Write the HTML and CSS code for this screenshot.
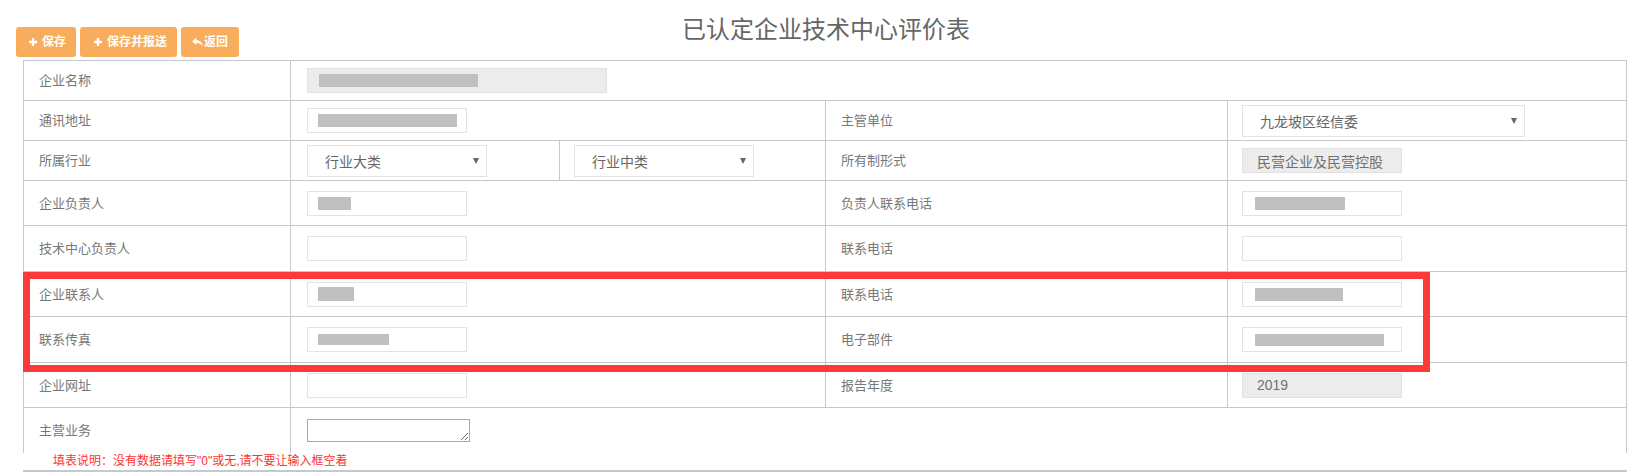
FILE: index.html
```html
<!DOCTYPE html>
<html lang="zh-CN">
<head>
<meta charset="utf-8">
<title>已认定企业技术中心评价表</title>
<link rel="stylesheet" href="styles.css">
</head>
<body>
<div class="page">
  <header class="topbar">
    <div class="actions">
      <button class="btn btn-save" type="button"><svg class="ico-plus" viewBox="0 0 8 8" width="8" height="8"><path d="M2.8 0h2.4v2.8H8v2.4H5.2V8H2.8V5.2H0V2.8h2.8z"/></svg>保存</button>
      <button class="btn btn-send" type="button"><svg class="ico-plus" viewBox="0 0 8 8" width="8" height="8"><path d="M2.8 0h2.4v2.8H8v2.4H5.2V8H2.8V5.2H0V2.8h2.8z"/></svg>保存并报送</button>
      <button class="btn btn-back" type="button"><svg class="ico-back" viewBox="0 0 12 10" width="11" height="10"><path d="M4.6 0.4 0.2 4.4 4.6 8.4V6c3 0 5.2 0.8 7.2 3.4C11.2 5.8 8.8 3.2 4.6 2.9z"/></svg>返回</button>
    </div>
    <h1 class="title">已认定企业技术中心评价表</h1>
    <div class="spacer"></div>
  </header>

  <div class="form-wrap">
    <div class="form-grid">
      <!-- row 1 -->
      <div class="cell label">企业名称</div>
      <div class="cell value span4"><div class="readonly wide"><span class="redact r-name"></span></div></div>
      <!-- row 2 -->
      <div class="cell label">通讯地址</div>
      <div class="cell value span2"><div class="input"><span class="redact r-addr"></span></div></div>
      <div class="cell label">主管单位</div>
      <div class="cell value right"><div class="select big"><span>九龙坡区经信委</span><i class="caret"></i></div></div>
      <!-- row 3 -->
      <div class="cell label">所属行业</div>
      <div class="cell value"><div class="select"><span>行业大类</span><i class="caret"></i></div></div>
      <div class="cell value sub"><div class="select"><span>行业中类</span><i class="caret"></i></div></div>
      <div class="cell label">所有制形式</div>
      <div class="cell value right"><div class="readonly">民营企业及民营控股</div></div>
      <!-- row 4 -->
      <div class="cell label">企业负责人</div>
      <div class="cell value span2"><div class="input"><span class="redact r-short"></span></div></div>
      <div class="cell label">负责人联系电话</div>
      <div class="cell value right"><div class="input"><span class="redact r-phone"></span></div></div>
      <!-- row 5 -->
      <div class="cell label">技术中心负责人</div>
      <div class="cell value span2"><div class="input"></div></div>
      <div class="cell label">联系电话</div>
      <div class="cell value right"><div class="input"></div></div>
      <!-- row 6 -->
      <div class="cell label">企业联系人</div>
      <div class="cell value span2"><div class="input"><span class="redact r-contact"></span></div></div>
      <div class="cell label">联系电话</div>
      <div class="cell value right"><div class="input"><span class="redact r-phone2"></span></div></div>
      <!-- row 7 -->
      <div class="cell label">联系传真</div>
      <div class="cell value span2"><div class="input"><span class="redact r-fax"></span></div></div>
      <div class="cell label">电子部件</div>
      <div class="cell value right"><div class="input"><span class="redact r-mail"></span></div></div>
      <!-- row 8 -->
      <div class="cell label">企业网址</div>
      <div class="cell value span2"><div class="input"></div></div>
      <div class="cell label">报告年度</div>
      <div class="cell value right"><div class="readonly">2019</div></div>
      <!-- row 9 -->
      <div class="cell label last">主营业务</div>
      <div class="cell value span4 last"><textarea class="area"></textarea></div>
    </div>
    <div class="highlight"></div>
  </div>

  <p class="note">填表说明：没有数据请填写"0"或无,请不要让输入框空着</p>
  <div class="rule"></div>
</div>
</body>
</html>
```

FILE: styles.css
```css
* { box-sizing: border-box; }

html, body {
  margin: 0;
  padding: 0;
  background: #fff;
}

body {
  font-family: "Liberation Sans", "Noto Sans CJK SC", sans-serif;
  color: #666;
  width: 1636px;
  height: 472px;
  overflow: hidden;
}

.page {
  width: 1636px;
}

/* ---------- header ---------- */
.topbar {
  display: grid;
  grid-template-columns: 1fr auto 1fr;
  align-items: start;
  height: 60px;
  padding-left: 16px;
}

.actions {
  display: flex;
  gap: 4px;
  margin-top: 27px;
}

.btn {
  display: flex;
  align-items: center;
  flex: none;
  height: 30px;
  border: 0;
  border-radius: 3px;
  background: #f7ad5c;
  color: #fff;
  font-family: "Liberation Sans", "Noto Sans CJK SC", sans-serif;
  font-size: 12px;
  font-weight: bold;
  line-height: 30px;
  white-space: nowrap;
  padding: 0 10px 0 13px;
  cursor: pointer;
}

.btn svg { fill: #fff; flex: none; }
.ico-plus { margin-right: 5px; }
.ico-back { margin-right: 1px; }

.btn-send { padding-left: 14px; }
.btn-back { padding-left: 11px; padding-right: 11px; }

.title {
  margin: 18px 0 0;
  font-size: 24px;
  line-height: 24px;
  font-weight: normal;
  color: #666;
  white-space: nowrap;
}

/* ---------- form grid ---------- */
.form-wrap {
  position: relative;
  margin-left: 23px;
  width: 1604px;
}

.form-grid {
  display: grid;
  grid-template-columns: 267px 269px 266px 402px 399px;
  grid-template-rows: 40px 40px 40px 45px 46px 45px 46px 45px 45px;
  border-left: 1px solid #c5c8ce;
  border-top: 1px solid #c5c8ce;
}

.cell {
  display: flex;
  align-items: center;
  border-right: 1px solid #c5c8ce;
  border-bottom: 1px solid #c5c8ce;
  min-width: 0;
}

.cell.last { border-bottom: 0; }

.label {
  padding-left: 15px;
  padding-bottom: 2px;
  font-size: 13px;
  color: #777;
}

.value { padding-left: 16px; }
.value.sub { padding-left: 14px; }
.value.right { padding-left: 14px; }

.span2 { grid-column: span 2; }
.span4 { grid-column: span 4; }

/* ---------- controls ---------- */
.input {
  display: flex;
  align-items: center;
  width: 160px;
  height: 25px;
  border: 1px solid #e3e3e3;
  background: #fff;
}

.readonly {
  display: flex;
  align-items: center;
  width: 160px;
  height: 25px;
  padding-left: 14px;
  border: 1px solid #e2e2e2;
  background: #ececec;
  font-size: 14px;
  color: #707070;
}

.readonly.wide { width: 300px; padding-left: 0; }

.select {
  position: relative;
  display: flex;
  align-items: center;
  width: 180px;
  height: 32px;
  padding-left: 17px;
  border: 1px solid #e3e3e3;
  background: #fff;
  font-size: 14px;
  color: #666;
}

.select.big { width: 283px; }

.caret {
  position: absolute;
  right: 7px;
  top: 12px;
  width: 0;
  height: 0;
  border-left: 3px solid transparent;
  border-right: 3px solid transparent;
  border-top: 6px solid #666;
}

.redact {
  display: block;
  height: 13px;
  margin-left: 10px;
  background: #c0c0c0;
}

.r-name { width: 159px; margin-left: 11px; }
.r-addr { width: 139px; }
.r-short { width: 33px; }
.r-phone { width: 90px; margin-left: 12px; }
.r-contact { width: 36px; height: 14px; }
.r-phone2 { width: 88px; margin-left: 12px; }
.r-fax { width: 71px; height: 11px; }
.r-mail { width: 129px; margin-left: 12px; height: 12px; }

.area {
  width: 163px;
  height: 23px;
  margin: 0;
  border: 1px solid #a9a9a9;
  border-radius: 0;
  resize: both;
  font-family: inherit;
}

/* ---------- overlay highlight ---------- */
.highlight {
  position: absolute;
  left: 0;
  top: 212px;
  width: 1407px;
  height: 100px;
  border: 7px solid #fc3a3a;
  pointer-events: none;
}

/* ---------- footer ---------- */
.note {
  margin: 0 0 0 53px;
  height: 17px;
  font-size: 12px;
  line-height: 17px;
  color: #f33;
}

.rule {
  margin-left: 23px;
  width: 1604px;
  height: 3px;
  background: #c5c8ce;
}
```
